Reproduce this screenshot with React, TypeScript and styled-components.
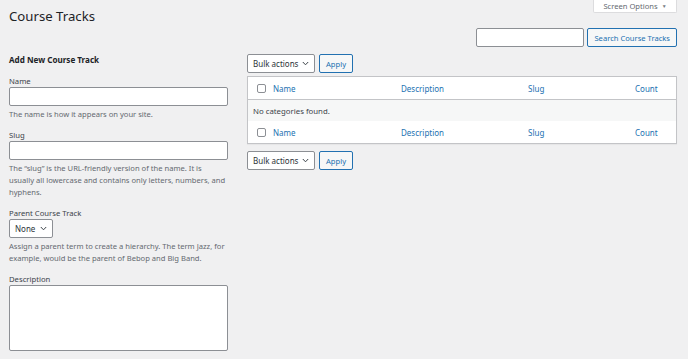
import styled, { createGlobalStyle } from "styled-components";

const GlobalStyle = createGlobalStyle`
  body {
    margin: 0;
    background: #f0f0f1;
    font-family: "Noto Sans", "Open Sans", sans-serif;
    color: #3c434a;
  }
  * { box-sizing: border-box; }
`;

const columns = ["Name", "Description", "Slug", "Count"];

const Chevron = () => (
  <svg width="7" height="5" viewBox="0 0 7 5">
    <polyline points="0.8,1 3.5,3.8 6.2,1" fill="none" stroke="#3c434a" strokeWidth="1" />
  </svg>
);

const BulkNav = () => (
  <TableNav>
    <Select $width={68}>
      Bulk actions <Chevron />
    </Select>
    <SecondaryButton>Apply</SecondaryButton>
  </TableNav>
);

const HeaderRow = () => (
  <Row>
    <CheckCell>
      <Checkbox />
    </CheckCell>
    {columns.map((c) => (
      <HeadCell key={c}>{c}</HeadCell>
    ))}
  </Row>
);

export default function App() {
  return (
    <>
      <GlobalStyle />
      <Page>
        <TopBar>
          <Title>Course Tracks</Title>
          <ScreenTab>
            Screen Options <Arrow>▼</Arrow>
          </ScreenTab>
        </TopBar>
        <SearchRow>
          <SearchInput />
          <SecondaryButton $pad={6}>Search Course Tracks</SecondaryButton>
        </SearchRow>

        <Columns>
          <LeftCol>
            <FormTitle>Add New Course Track</FormTitle>
            <Field>
              <Label>Name</Label>
              <TextInput />
              <Help>The name is how it appears on your site.</Help>
            </Field>
            <Field>
              <Label>Slug</Label>
              <TextInput />
              <Help>
                The “slug” is the URL-friendly version of the name. It is usually all lowercase and
                contains only letters, numbers, and hyphens.
              </Help>
            </Field>
            <Field>
              <Label>Parent Course Track</Label>
              <Select $width={44}>
                None <Chevron />
              </Select>
              <Help>
                Assign a parent term to create a hierarchy. The term Jazz, for example, would be the
                parent of Bebop and Big Band.
              </Help>
            </Field>
            <Field>
              <Label>Description</Label>
              <TextArea />
            </Field>
          </LeftCol>

          <RightCol>
            <BulkNav />
            <Table>
              <HeaderRow />
              <EmptyRow>No categories found.</EmptyRow>
              <HeaderRow />
            </Table>
            <BulkNav />
          </RightCol>
        </Columns>
      </Page>
    </>
  );
}

const Page = styled.div`
  padding: 0 11px 0 9px;
`;

const TopBar = styled.div`
  display: flex;
  justify-content: space-between;
  align-items: flex-start;
  height: 28px;
`;

const Title = styled.h1`
  margin: 0;
  padding-top: 7px;
  font-size: 13.2px;
  font-weight: 400;
  line-height: 18px;
  color: #1d2327;
`;

const ScreenTab = styled.div`
  width: 84px;
  height: 13px;
  background: #fff;
  border: 1px solid #dcdcde;
  border-top: none;
  border-radius: 0 0 2px 2px;
  font-size: 7.6px;
  color: #646970;
  display: flex;
  align-items: center;
  justify-content: center;
  gap: 4px;
`;

const Arrow = styled.span`
  font-size: 5px;
  color: #787c82;
`;

const SearchRow = styled.div`
  display: flex;
  justify-content: flex-end;
  gap: 3px;
`;

const SearchInput = styled.div`
  width: 108px;
  height: 19px;
  background: #fff;
  border: 1px solid #8c8f94;
  border-radius: 2px;
`;

const SecondaryButton = styled.div<{ $pad?: number }>`
  height: 19px;
  padding: 0 ${(p) => p.$pad ?? 6}px;
  border: 1px solid #2271b1;
  border-radius: 2px;
  background: #f6f7f7;
  color: #2271b1;
  font-size: 7.6px;
  display: flex;
  align-items: center;
  white-space: nowrap;
`;

const Columns = styled.div`
  display: flex;
  gap: 19px;
  margin-top: 6px;
`;

const LeftCol = styled.div`
  width: 219px;
  flex-shrink: 0;
`;

const RightCol = styled.div`
  flex: 1;
  padding-top: 1px;
`;

const FormTitle = styled.h2`
  margin: 0 0 8px;
  font-size: 8.1px;
  font-weight: 700;
  line-height: 14px;
  color: #1d2327;
`;

const Field = styled.div`
  margin-bottom: 9px;
`;

const Label = styled.div`
  font-size: 7.7px;
  line-height: 12px;
  color: #3c434a;
`;

const TextInput = styled.div`
  height: 19px;
  background: #fff;
  border: 1px solid #8c8f94;
  border-radius: 2px;
`;

const TextArea = styled.div`
  height: 66px;
  background: #fff;
  border: 1px solid #8c8f94;
  border-radius: 2px;
`;

const Help = styled.p`
  margin: 2px 0 0;
  font-size: 7.6px;
  line-height: 12px;
  color: #646970;
`;

const Select = styled.div<{ $width: number }>`
  width: ${(p) => p.$width}px;
  height: 19px;
  background: #fff;
  border: 1px solid #8c8f94;
  border-radius: 2px;
  padding: 0 5px;
  font-size: 8px;
  color: #2c3338;
  display: flex;
  align-items: center;
  justify-content: space-between;
`;

const TableNav = styled.div`
  display: flex;
  gap: 4px;
  height: 19px;
`;

const Table = styled.div`
  margin: 3px 0 7px;
  background: #fff;
  border: 1px solid #c3c4c7;
  box-shadow: 0 1px 1px rgba(0, 0, 0, 0.04);
`;

const Row = styled.div`
  display: grid;
  grid-template-columns: 18px 128px 127px 107px 1fr;
  align-items: center;
  height: 22px;
  & + div {
    border-top: 1px solid #c3c4c7;
  }
`;

const CheckCell = styled.div`
  display: flex;
  justify-content: flex-end;
  padding-top: 1px;
`;

const Checkbox = styled.div`
  width: 9px;
  height: 9px;
  background: #fff;
  border: 1px solid #8c8f94;
  border-radius: 2px;
`;

const HeadCell = styled.div`
  padding-left: 7px;
  font-size: 8px;
  color: #2271b1;
`;

const EmptyRow = styled.div`
  height: 22px;
  border-top: 1px solid #c3c4c7;
  background: #f6f7f7;
  padding-left: 5px;
  font-size: 7.8px;
  color: #3c434a;
  display: flex;
  align-items: center;
`;
